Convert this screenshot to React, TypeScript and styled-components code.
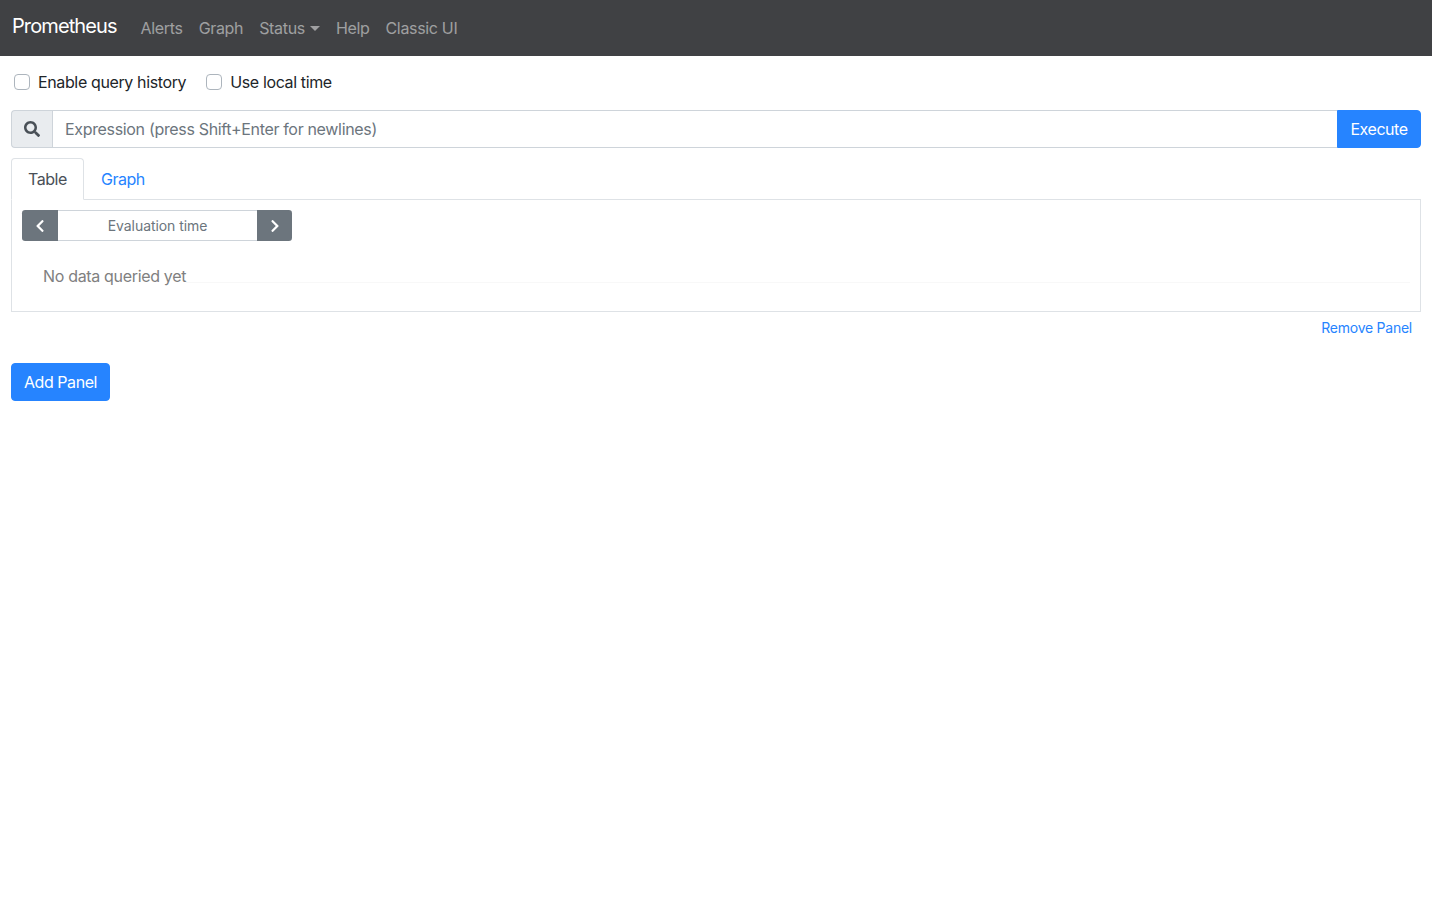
import React from "react";
import styled, { createGlobalStyle } from "styled-components";
import { FaChevronLeft, FaChevronRight, FaSearch } from "react-icons/fa";

const GlobalStyle = createGlobalStyle`
  * {
    box-sizing: border-box;
  }
  html,
  body {
    margin: 0;
    background: #fff;
    color: #212529;
    font-family: Inter, "Liberation Sans", sans-serif;
    font-size: 16px;
    line-height: 24px;
    letter-spacing: -0.33px;
  }
`;

const Navbar = styled.nav`
  height: 56px;
  background: #404144;
  display: flex;
  align-items: center;
  padding: 0 12px;
`;

const Brand = styled.a`
  color: #fff;
  font-size: 20px;
  letter-spacing: -0.9px;
  margin-right: 16px;
  margin-top: -4px;
`;

const NavLink = styled.a`
  color: rgba(255, 255, 255, 0.5);
  padding: 0 8px;
  display: flex;
  align-items: center;
`;

const Caret = styled.span`
  margin-left: 5px;
  border-top: 5px solid;
  border-left: 5.2px solid transparent;
  border-right: 5.2px solid transparent;
`;

const Links = styled.div`
  display: flex;
`;

const Main = styled.main`
  padding: 0 11px;
`;

const Options = styled.div`
  display: flex;
  align-items: center;
  height: 52px;
  margin-bottom: 2px;
  padding-left: 3px;
  gap: 20px;
`;

const CheckLabel = styled.label`
  display: flex;
  align-items: center;
  gap: 8px;
  letter-spacing: -0.37px;
`;

const CheckBox = styled.span`
  width: 16px;
  height: 16px;
  border: 1px solid #adb5bd;
  border-radius: 4px;
  background: #fff;
`;

const QueryRow = styled.div`
  display: flex;
  height: 38px;
`;

const SearchAddon = styled.span`
  width: 41px;
  display: flex;
  align-items: center;
  justify-content: center;
  background: #e9ecef;
  border: 1px solid #ced4da;
  border-right: 0;
  border-radius: 4px 0 0 4px;
  color: #495057;
  font-size: 16px;
`;

const Expression = styled.div`
  flex: 1;
  display: flex;
  align-items: center;
  padding: 0 12px;
  border: 1px solid #ced4da;
  border-right: 0;
  color: #6c757d;
`;

const PrimaryButton = styled.button<{ $joined?: boolean }>`
  height: 38px;
  min-width: ${(props) => (props.$joined ? "84px" : "99px")};
  padding: 0 12px;
  border: 1px solid #2684ff;
  background: #2684ff;
  color: #fff;
  font: inherit;
  letter-spacing: -0.45px;
  border-radius: ${(props) => (props.$joined ? "0 4px 4px 0" : "4px")};
`;

const Tabs = styled.div`
  display: flex;
  margin-top: 10px;
  height: 42px;
  border-bottom: 1px solid #dee2e6;
`;

const Tab = styled.a<{ $active?: boolean }>`
  height: 42px;
  padding: 8px 16px;
  border: 1px solid ${(props) => (props.$active ? "#dee2e6" : "transparent")};
  border-bottom-color: ${(props) => (props.$active ? "#fff" : "transparent")};
  border-radius: 4px 4px 0 0;
  background: ${(props) => (props.$active ? "#fff" : "transparent")};
  color: ${(props) => (props.$active ? "#495057" : "#2684ff")};
  letter-spacing: -0.45px;
`;

const TabPanel = styled.section`
  height: 112px;
  padding: 10px;
  border: 1px solid #dee2e6;
  border-top: 0;
`;

const TimeInput = styled.div`
  display: flex;
  width: 270px;
  height: 31px;
`;

const TimeButton = styled.span<{ $side: "left" | "right" }>`
  width: ${(props) => (props.$side === "left" ? "36px" : "35px")};
  display: flex;
  align-items: center;
  justify-content: center;
  background: #6c757d;
  color: #fff;
  font-size: 14px;
  border-radius: ${(props) =>
    props.$side === "left" ? "3.2px 0 0 3.2px" : "0 3.2px 3.2px 0"};
`;

const TimeField = styled.div`
  flex: 1;
  display: flex;
  align-items: center;
  justify-content: center;
  border: 1px solid #ced4da;
  border-width: 1px 0;
  color: #6c757d;
  font-size: 14px;
  letter-spacing: -0.07px;
`;

const ResultRow = styled.div`
  display: flex;
  align-items: flex-end;
  margin-top: 23px;
  padding-left: 21px;
  height: 24px;
`;

const Muted = styled.span`
  color: #808080;
`;

const RowRule = styled.span`
  flex: 1;
  border-bottom: 1px solid #f8f8f8;
  margin-bottom: 5px;
`;

const PanelFooter = styled.div`
  display: flex;
  justify-content: flex-end;
  padding: 4px 9px 0 0;
  height: 51px;
`;

const RemoveLink = styled.a`
  color: #2684ff;
  font-size: 14px;
  letter-spacing: -0.25px;
`;

export default function App() {
  return (
    <>
      <GlobalStyle />
      <Navbar>
        <Brand>Prometheus</Brand>
        <Links>
          <NavLink>Alerts</NavLink>
          <NavLink>Graph</NavLink>
          <NavLink>
            Status
            <Caret />
          </NavLink>
          <NavLink>Help</NavLink>
          <NavLink>Classic UI</NavLink>
        </Links>
      </Navbar>
      <Main>
        <Options>
          <CheckLabel>
            <CheckBox />
            Enable query history
          </CheckLabel>
          <CheckLabel>
            <CheckBox />
            Use local time
          </CheckLabel>
        </Options>
        <QueryRow>
          <SearchAddon>
            <FaSearch />
          </SearchAddon>
          <Expression>Expression (press Shift+Enter for newlines)</Expression>
          <PrimaryButton $joined>Execute</PrimaryButton>
        </QueryRow>
        <Tabs>
          <Tab $active>Table</Tab>
          <Tab>Graph</Tab>
        </Tabs>
        <TabPanel>
          <TimeInput>
            <TimeButton $side="left">
              <FaChevronLeft />
            </TimeButton>
            <TimeField>Evaluation time</TimeField>
            <TimeButton $side="right">
              <FaChevronRight />
            </TimeButton>
          </TimeInput>
          <ResultRow>
            <Muted>No data queried yet</Muted>
            <RowRule />
          </ResultRow>
        </TabPanel>
        <PanelFooter>
          <RemoveLink>Remove Panel</RemoveLink>
        </PanelFooter>
        <PrimaryButton>Add Panel</PrimaryButton>
      </Main>
    </>
  );
}
